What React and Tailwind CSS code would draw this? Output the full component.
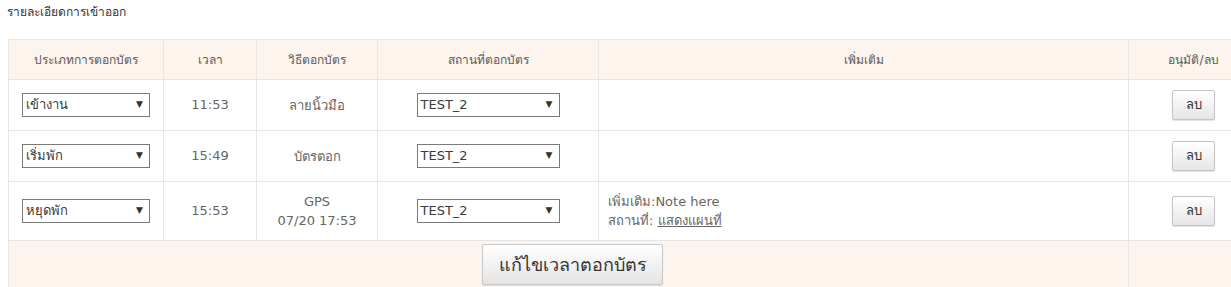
import React from "react";

function FakeSelect({ value, width }) {
  return (
    <div
      className={`inline-flex items-center justify-between h-[24px] border border-[#7a7a7a] bg-white pl-[3px] pr-[6px] text-[13px] text-[#3a3a3a] align-middle ${width}`}
    >
      <span>{value}</span>
      <span className="text-[9px] text-[#3a3128]">▼</span>
    </div>
  );
}

function DelButton() {
  return (
    <button className="h-[30px] w-[43px] border border-[#c4c4c4] rounded-[2px] bg-gradient-to-b from-white to-[#e6e6e6] text-[13px] text-[#333] shadow-[0_1px_1px_rgba(0,0,0,0.12)]">
      ลบ
    </button>
  );
}

const rows = [
  { type: "เข้างาน", time: "11:53", method: ["ลายนิ้วมือ"], place: "TEST_2", h: "h-[51px]", note: null },
  { type: "เริ่มพัก", time: "15:49", method: ["บัตรตอก"], place: "TEST_2", h: "h-[51px]", note: null },
  { type: "หยุดพัก", time: "15:53", method: ["GPS", "07/20 17:53"], place: "TEST_2", h: "h-[59px]", note: true },
];

export default function App() {
  return (
    <div
      className="w-[1231px] h-[287px] overflow-hidden bg-white text-[#666]"
      style={{ fontFamily: '"DejaVu Sans", "Noto Sans", sans-serif' }}
    >
      <div className="pl-[7px] pt-[3px] h-[39px] text-[12px] text-[#333]">รายละเอียดการเข้าออก</div>
      <div className="pl-[8px]">
        <table className="table-fixed border-collapse w-[1250px] text-[13px]">
          <colgroup>
            <col className="w-[155px]" />
            <col className="w-[93px]" />
            <col className="w-[121px]" />
            <col className="w-[221px]" />
            <col className="w-[530px]" />
            <col className="w-[130px]" />
          </colgroup>
          <thead>
            <tr className="h-[40px] bg-[#fdf4ee]">
              {["ประเภทการตอกบัตร", "เวลา", "วิธีตอกบัตร", "สถานที่ตอกบัตร", "เพิ่มเติม", "อนุมัติ/ลบ"].map((t) => (
                <th key={t} className="border border-[#e8e6e4] font-normal text-[12px] text-[#5a5a5a] text-center align-middle">
                  {t}
                </th>
              ))}
            </tr>
          </thead>
          <tbody>
            {rows.map((r, i) => (
              <tr key={i} className={r.h}>
                <td className="border border-[#e8e6e4] text-center align-middle">
                  <FakeSelect value={r.type} width="w-[128px]" />
                </td>
                <td className="border border-[#e8e6e4] text-center align-middle">{r.time}</td>
                <td className="border border-[#e8e6e4] text-center align-middle leading-[19px]">
                  {r.method.map((m) => (
                    <div key={m}>{m}</div>
                  ))}
                </td>
                <td className="border border-[#e8e6e4] text-center align-middle">
                  <FakeSelect value={r.place} width="w-[143px]" />
                </td>
                <td className="border border-[#e8e6e4] align-middle pl-[9px] leading-[19px]">
                  {r.note && (
                    <>
                      <div>เพิ่มเติม:Note here</div>
                      <div>
                        สถานที่: <span className="underline">แสดงแผนที่</span>
                      </div>
                    </>
                  )}
                </td>
                <td className="border border-[#e8e6e4] text-center align-middle">
                  <DelButton />
                </td>
              </tr>
            ))}
            <tr className="h-[60px] bg-[#fdf4ee]">
              <td colSpan={5} className="border border-[#e8e6e4] text-center align-top pt-[3px] pl-[8px]">
                <button className="h-[41px] w-[181px] border border-[#c8c8c8] rounded-[2px] bg-gradient-to-b from-white to-[#e4e4e4] text-[18px] text-[#333] shadow-[0_1px_1px_rgba(0,0,0,0.1)]">
                  แก้ไขเวลาตอกบัตร
                </button>
              </td>
              <td className="border border-[#e8e6e4]"></td>
            </tr>
          </tbody>
        </table>
      </div>
    </div>
  );
}
